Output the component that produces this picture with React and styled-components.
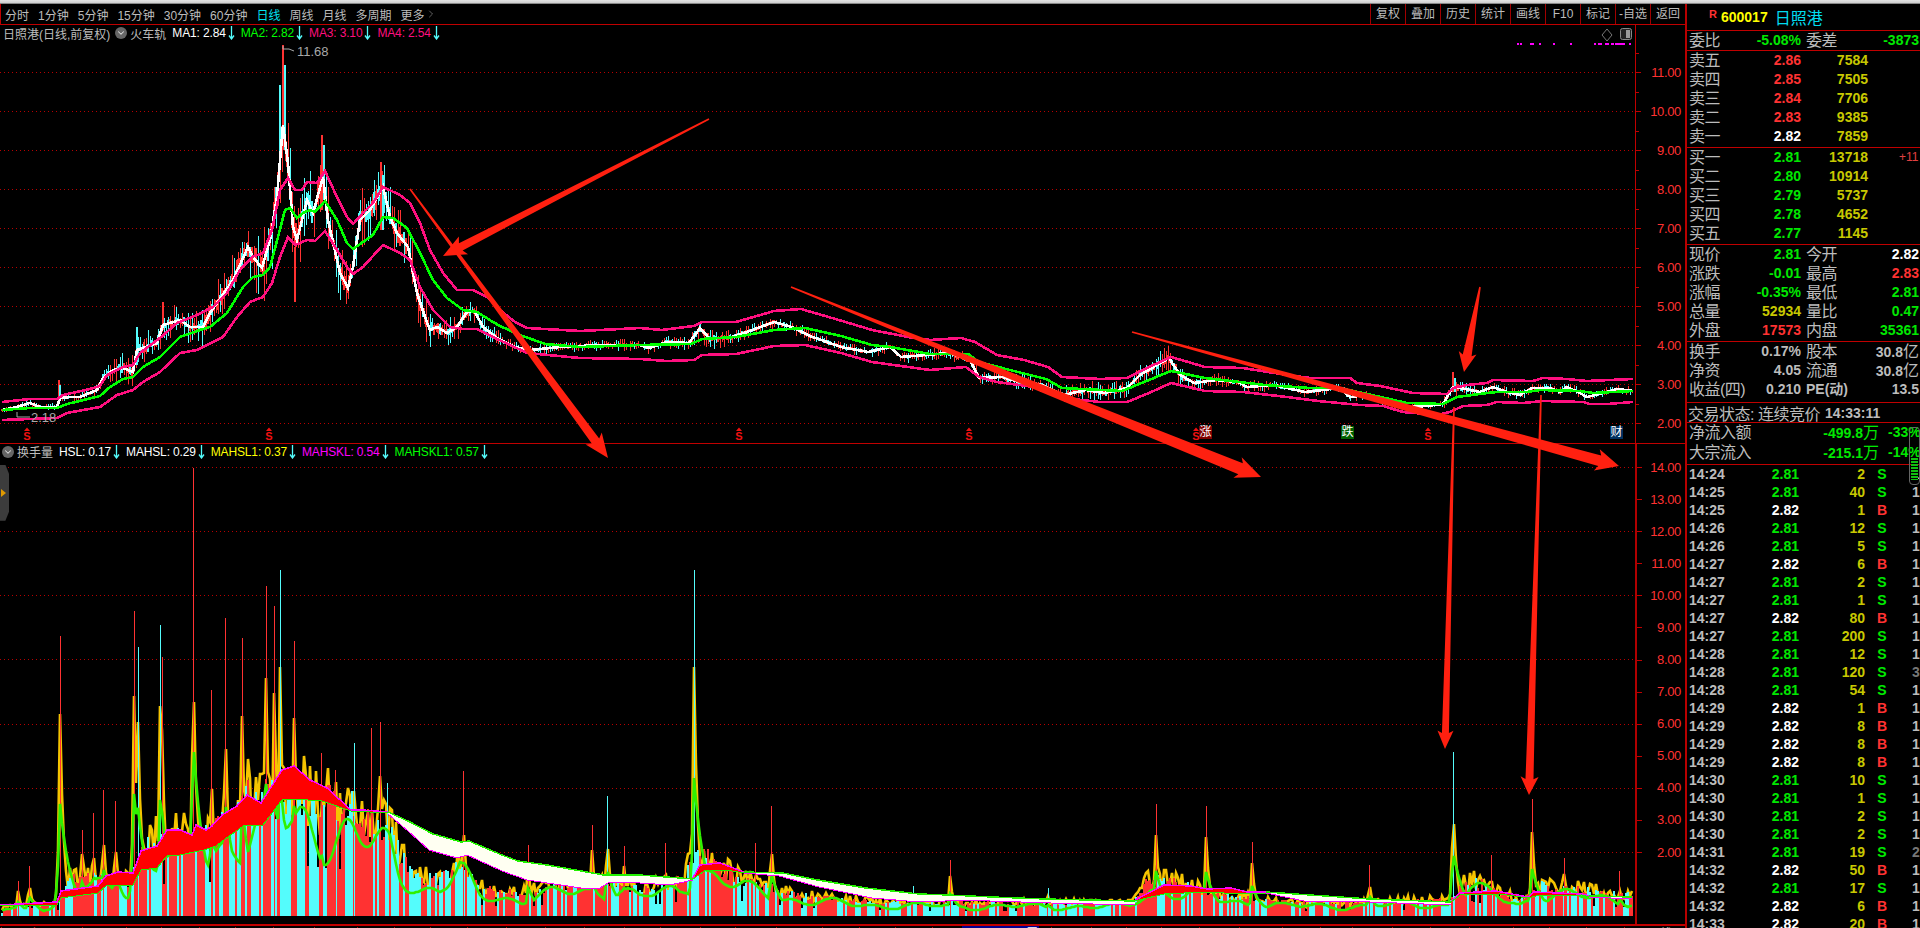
import React from 'react'
import styled, { createGlobalStyle } from 'styled-components'
import { ChevronDown, ChevronRight } from 'lucide-react'

// ---- colours used all over the terminal
const RED = '#ff3232'
const LINE = '#c00000'
const CYAN = '#54fcfc'
const GREEN = '#00e800'
const OLIVE = '#c8c800'
const PINK = '#ff0f7f'
const GREY = '#bcbcbc'

const SANS = `"Liberation Sans", "Noto Sans CJK SC", sans-serif`

// ---- price lines, read off the screenshot as [x, y]
const WHITE_LINE = [[2,410],[13,408],[30,403],[40,407],[57,407],[60,398],[70,397],[80,397],[97,390],[103,378],[113,370],[123,368],[133,372],[137,350],[143,348],[157,343],[163,325],[180,320],[190,327],[203,327],[210,313],[217,303],[233,280],[248,247],[253,257],[262,268],[270,240],[277,197],[283,125],[288,163],[293,227],[297,240],[307,200],[313,213],[323,177],[328,220],[340,273],[348,288],[353,267],[360,220],[370,210],[383,187],[390,217],[397,233],[408,247],[417,293],[425,317],[430,330],[437,327],[447,333],[457,327],[467,312],[475,312],[483,327],[497,338],[515,347],[530,350],[560,347],[600,345],[640,345],[649,348],[667,342],[689,343],[700,328],[709,338],[729,338],[747,332],[774,322],[792,327],[810,336],[841,347],[868,352],[890,347],[901,357],[926,355],[948,353],[970,360],[979,378],[1002,377],[1019,382],[1042,385],[1064,395],[1086,390],[1104,393],[1127,388],[1140,375],[1169,358],[1180,375],[1194,383],[1216,380],[1238,382],[1247,387],[1274,385],[1305,392],[1340,388],[1350,397],[1367,395],[1387,404],[1410,407],[1427,406],[1443,404],[1453,387],[1460,388],[1480,392],[1493,387],[1507,392],[1520,395],[1532,388],[1550,388],[1560,392],[1567,387],[1578,392],[1587,397],[1607,392],[1617,389],[1633,391]]
const GREEN_LINE = [[2,410],[30,408],[57,408],[67,404],[100,396],[110,387],[123,379],[133,377],[143,367],[160,357],[180,337],[200,330],[210,327],[227,313],[243,287],[253,277],[263,275],[270,267],[278,237],[285,210],[290,208],[297,218],[303,213],[310,210],[315,212],[325,201],[337,220],[347,243],[353,249],[363,242],[373,235],[383,217],[393,218],[407,228],[420,253],[433,280],[447,298],[463,310],[477,312],[493,322],[500,326],[520,335],[545,344],[580,347],[640,345],[691,344],[702,339],[736,337],[774,330],[805,328],[841,336],[872,345],[890,347],[930,354],[968,354],[979,362],[1006,369],[1046,379],[1062,388],[1122,391],[1144,382],[1171,371],[1205,378],[1265,385],[1310,388],[1340,388],[1367,394],[1407,403],[1443,404],[1457,397],[1487,393],[1497,392],[1527,392],[1540,390],[1580,391],[1593,393],[1633,391]]
const UPPER_BAND = [[2,402],[30,399],[57,399],[63,395],[90,389],[100,386],[107,375],[123,367],[133,365],[140,353],[160,338],[177,323],[197,315],[213,307],[227,293],[240,270],[252,257],[263,253],[272,230],[280,190],[288,178],[295,190],[302,190],[307,182],[317,183],[325,171],[337,197],[347,217],[353,224],[363,213],[373,203],[383,187],[400,195],[410,203],[420,223],[430,250],[443,273],[457,290],[473,290],[487,297],[500,310],[515,322],[527,328],[580,331],[640,328],[662,330],[694,326],[702,322],[736,322],[774,311],[801,309],[832,318],[872,330],[908,337],[930,340],[961,338],[975,342],[997,355],[1024,360],[1048,367],[1062,377],[1100,379],[1127,378],[1149,367],[1171,357],[1205,367],[1243,368],[1287,375],[1310,378],[1350,378],[1357,383],[1380,386],[1413,393],[1447,394],[1453,388],[1467,385],[1487,383],[1493,380],[1533,381],[1543,378],[1567,379],[1587,381],[1633,379]]
const LOWER_BAND = [[2,420],[57,418],[67,413],[100,407],[117,395],[133,390],[143,382],[160,372],[180,353],[197,350],[223,337],[237,317],[250,302],[263,297],[272,283],[280,257],[288,237],[295,245],[307,240],[315,241],[325,231],[337,250],[347,267],[353,274],[363,267],[383,245],[400,253],[410,260],[420,287],[433,310],[450,327],[463,329],[477,329],[493,337],[527,353],[580,358],[640,359],[667,361],[694,360],[702,355],[736,354],[774,346],[805,345],[841,353],[872,362],[930,370],[966,367],[979,377],[997,382],[1042,388],[1064,398],[1100,402],[1127,402],[1149,393],[1171,383],[1205,391],[1243,392],[1287,397],[1318,401],[1360,405],[1383,406],[1403,412],[1437,415],[1450,412],[1463,406],[1487,405],[1497,402],[1523,403],[1543,401],[1583,402],[1590,404],[1607,404],[1633,402]]
const WICK_SIZE = [[0,3],[55,4],[64,4],[100,6],[115,14],[135,17],[165,16],[200,20],[240,30],[275,48],[300,38],[340,32],[385,32],[420,28],[440,16],[480,11],[520,5],[690,7],[700,14],[740,7],[900,6],[950,7],[1140,11],[1170,16],[1200,7],[1440,4],[1455,11],[1470,6],[1640,5]]
const BIG_WICKS = [[283,45,150,RED],[285,65,150,CYAN],[280,85,160,CYAN],[322,135,210,RED],[324,145,200,CYAN],[381,162,230,RED],[383,175,230,CYAN],[295,247,302,RED],[59,380,400,RED],[60,385,400,CYAN],[137,327,365,CYAN],[163,302,330,RED],[1453,372,392,RED],[1455,378,392,CYAN]]

// ---- turnover panel
const VOLUME_TOPS = [[0,905],[57,900],[70,875],[100,875],[130,878],[145,840],[170,830],[200,838],[230,808],[250,790],[280,790],[300,785],[330,793],[350,800],[370,820],[390,822],[400,852],[420,875],[440,875],[460,855],[480,885],[520,890],[560,882],[600,877],[620,877],[640,888],[680,877],[700,845],[720,865],[750,878],[800,892],[850,897],[900,899],[1000,900],[1130,900],[1150,875],[1180,880],[1220,892],[1300,900],[1450,897],[1470,875],[1520,897],[1540,882],[1632,892]]
const VOLUME_SPIKES = [[18,878,RED],[29,863,RED],[60,633,RED],[82,827,RED],[93,810,RED],[103,787,RED],[115,798,RED],[134,608,RED],[138,644,CYAN],[160,622,CYAN],[162,654,RED],[193,465,RED],[211,687,RED],[225,615,RED],[242,635,RED],[266,583,RED],[274,603,RED],[280,567,CYAN],[294,638,RED],[321,750,RED],[335,767,RED],[354,740,CYAN],[371,725,RED],[380,719,RED],[387,780,CYAN],[463,768,RED],[528,842,RED],[592,822,RED],[607,793,CYAN],[624,843,RED],[665,840,RED],[694,567,CYAN],[755,840,RED],[771,803,RED],[913,883,CYAN],[950,857,RED],[1048,885,CYAN],[1156,801,RED],[1206,803,RED],[1252,839,RED],[1369,862,RED],[1453,749,CYAN],[1491,852,RED],[1532,796,RED],[1564,855,RED],[1619,868,RED]]

// ribbon between the two long averages, red while the fast one is above
const RIBBONS = [
  { fill: '#ff0000', top: [[0,902],[57,899],[61,888],[98,883],[106,873],[118,869],[133,870],[141,848],[157,843],[167,827],[180,827],[192,832],[196,822],[206,827],[212,823],[222,812],[237,803],[247,792],[261,800],[282,767],[294,763],[310,777],[327,785],[351,807],[363,807],[388,809]], bottom: [[0,903],[57,902],[61,895],[98,890],[106,883],[133,882],[141,867],[157,865],[167,853],[180,852],[204,847],[216,843],[229,833],[245,822],[263,822],[282,797],[294,796],[322,798],[351,808],[388,810]] },
  { fill: '#fffff2', top: [[388,809],[408,818],[433,831],[461,839],[469,838],[502,852],[518,858],[547,862],[604,872],[640,872],[693,876]], bottom: [[388,811],[408,828],[429,847],[457,855],[467,852],[502,868],[527,877],[588,886],[600,885],[610,879],[640,880],[670,882],[693,877]] },
  { fill: '#ff0000', top: [[693,875],[700,862],[720,860],[744,869]], bottom: [[693,876],[706,867],[726,867],[744,870]] },
  { fill: '#fffff2', top: [[744,869],[783,870],[812,876],[866,885],[919,891],[949,892],[992,894],[1045,896],[1135,898]], bottom: [[744,870],[779,873],[819,884],[872,895],[919,899],[945,898],[959,897],[1051,900],[1135,902]] },
  { fill: '#ff0000', top: [[1135,897],[1164,882],[1191,883],[1207,886],[1231,885],[1247,889],[1266,889]], bottom: [[1135,898],[1164,891],[1204,889],[1244,891],[1266,890]] },
  { fill: '#fffff2', top: [[1266,889],[1370,896],[1451,899]], bottom: [[1266,890],[1304,898],[1370,899],[1451,902]] },
  { fill: '#ff0000', top: [[1451,898],[1460,890],[1496,888],[1528,894]], bottom: [[1451,899],[1460,892],[1500,891],[1528,895]] },
  { fill: '#ff0000', top: [[1528,894],[1534,889],[1582,891],[1589,893]], bottom: [[1528,895],[1536,893],[1582,892],[1589,894]] },
  { fill: '#fffff2', top: [[1589,893],[1632,894]], bottom: [[1589,894],[1632,896]] },
]

const DRAWN_ARROWS = [
  { tail: [709,119], tip: [443,256], neck: 8, head: 20, wing: 10 },
  { tail: [410,189], tip: [608,458], neck: 9, head: 21, wing: 10 },
  { tail: [791,287], tip: [1261,477], neck: 12, head: 22, wing: 11 },
  { tail: [1132,332], tip: [1619,466], neck: 11, head: 20, wing: 11 },
  { tail: [1480,287], tip: [1464,372], neck: 9, head: 17, wing: 9 },
  { tail: [1454,407], tip: [1445,749], neck: 7, head: 16, wing: 8 },
  { tail: [1541,395], tip: [1529,795], neck: 8, head: 16, wing: 9 },
]

const MAGENTA_DASHES = [[1517,2],[1520,2],[1530,4],[1539,2],[1553,2],[1570,2],[1594,2],[1598,4],[1605,4],[1611,3],[1615,10],[1629,2]]
const SIGNALS = [27, 269, 739, 969, 1196, 1428]
const UPPER_GRID = [72, 111, 150, 189, 228, 267, 306, 345, 384, 423]
const LOWER_GRID = [464, 528, 592, 656, 721, 785, 849]

const DATE_LABELS = [[1,'2014年'],[82,'9'],[126,'10'],[161,'12'],[199,'2'],[235,'4'],[273,'6'],[314,'8'],[357,'10'],[394,'12'],[430,'2'],[467,'4'],[506,'6'],[545,'8'],[584,'10'],[624,'12'],[660,'2'],[700,'4'],[735,'6'],[776,'8'],[822,'10'],[859,'12'],[895,'2'],[932,'4'],[1051,'10'],[1091,'12'],[1126,'2'],[1161,'4'],[1199,'6'],[1239,'8'],[1282,'10'],[1320,'12'],[1352,'2'],[1392,'4'],[1430,'6'],[1469,'8'],[1513,'10'],[1549,'12'],[1586,'2'],[1624,'4']]

const LEFT_TOOLS = ['分时', '1分钟', '5分钟', '15分钟', '30分钟', '60分钟', '日线', '周线', '月线', '多周期']
const RIGHT_TOOLS = ['复权', '叠加', '历史', '统计', '画线', 'F10', '标记', '-自选', '返回']

const SELLS = [['卖五','2.86','7584',RED],['卖四','2.85','7505',RED],['卖三','2.84','7706',RED],['卖二','2.83','9385',RED],['卖一','2.82','7859','#fff']]
const BUYS = [['买一','2.81','13718',GREEN,'+11'],['买二','2.80','10914',GREEN],['买三','2.79','5737',GREEN],['买四','2.78','4652',GREEN],['买五','2.77','1145',GREEN]]
const QUOTES = [
  ['现价','2.81',GREEN,'今开','2.82','#fff'],
  ['涨跌','-0.01',GREEN,'最高','2.83',RED],
  ['涨幅','-0.35%',GREEN,'最低','2.81',GREEN],
  ['总量','52934',OLIVE,'量比','0.47',GREEN],
  ['外盘','17573',RED,'内盘','35361',GREEN],
]
const TICKS = [
  ['14:24','2.81','2','S','1'],['14:25','2.81','40','S','1'],['14:25','2.82','1','B','1'],['14:26','2.81','12','S','1'],
  ['14:26','2.81','5','S','1'],['14:27','2.82','6','B','1'],['14:27','2.81','2','S','1'],['14:27','2.81','1','S','1'],
  ['14:27','2.82','80','B','1'],['14:27','2.81','200','S','1'],['14:28','2.81','12','S','1'],['14:28','2.81','120','S','3'],
  ['14:28','2.81','54','S','1'],['14:29','2.82','1','B','1'],['14:29','2.82','8','B','1'],['14:29','2.82','8','B','1'],
  ['14:29','2.82','8','B','1'],['14:30','2.81','10','S','1'],['14:30','2.81','1','S','1'],['14:30','2.81','2','S','1'],
  ['14:30','2.81','2','S','1'],['14:31','2.81','19','S','2'],['14:32','2.82','50','B','1'],['14:32','2.81','17','S','1'],
  ['14:32','2.82','6','B','1'],['14:33','2.82','20','B','1'],
]

// ---- small helpers
const makeRandom = (seed) => () => {
  seed = (seed * 16807) % 2147483647
  return (seed - 1) / 2147483646
}

const valueAt = (keys, x) => {
  if (x <= keys[0][0]) return keys[0][1]
  for (let i = 1; i < keys.length; i++) {
    if (x <= keys[i][0]) {
      const [x0, y0] = keys[i - 1]
      const [x1, y1] = keys[i]
      return y0 + ((x - x0) / (x1 - x0)) * (y1 - y0)
    }
  }
  return keys[keys.length - 1][1]
}

const toPoints = (list) => list.map((p) => p.join(',')).join(' ')

const arrowPoints = ({ tail, tip, neck, head, wing }) => {
  const dx = tip[0] - tail[0]
  const dy = tip[1] - tail[1]
  const len = Math.hypot(dx, dy)
  const ux = dx / len
  const uy = dy / len
  const at = (back, side) => [tip[0] - ux * back - uy * side, tip[1] - uy * back + ux * side]
  return toPoints([
    at(len, 0.8), at(head, neck / 2), at(head * 1.15, wing), tip,
    at(head * 1.15, -wing), at(head, -neck / 2), at(len, -0.8),
  ])
}

// candles are generated around the white line, not stored bar by bar
const buildCandles = () => {
  const rand = makeRandom(4711)
  let red = ''
  let cyan = ''
  let redBody = ''
  let cyanBody = ''
  for (let x = 2; x < 1633; x += 2) {
    const mid = valueAt(WHITE_LINE, x)
    const size = valueAt(WICK_SIZE, x)
    const top = Math.round(mid - size * rand())
    const bottom = Math.round(mid + size * rand())
    const isRed = rand() > 0.45
    const wick = `M${x} ${top}V${bottom}`
    const body = `M${x} ${Math.round(mid - size * 0.35 * rand())}V${Math.round(mid + size * 0.35 * rand())}`
    if (isRed) {
      red += wick
      redBody += body
    } else {
      cyan += wick
      cyanBody += body
    }
  }
  return { red, cyan, redBody, cyanBody }
}

const spikeHeight = (s) => 913 - s[1]

const orangeAt = (x, base, jitter) => {
  let h = base * 0.9 * jitter
  VOLUME_SPIKES.forEach((s) => {
    const dx = x - s[0]
    const shape = Math.exp(-Math.abs(dx) / (dx < 0 ? 1.8 : 4))
    h = Math.max(h, Math.min(spikeHeight(s) * 0.72, 275) * shape)
  })
  return h
}

const greenAt = (x, base) => {
  // a slow wobble so the average doesn't run as a flat line between spikes
  const wobble = 0.72 + 0.3 * Math.sin(x / 9) * Math.sin(x / 23)
  let h = base * wobble
  VOLUME_SPIKES.forEach((s) => {
    const dx = x - s[0]
    const shape = dx < 0 ? Math.exp(dx / 2.5) : Math.exp(-dx / 11)
    h = Math.max(h, Math.min(spikeHeight(s) * 0.4, 190) * shape)
  })
  return h
}

const buildVolumes = () => {
  const rand = makeRandom(90210)
  let red = ''
  let cyan = ''
  let redIsOn = true
  const orange = []
  const lime = []
  for (let x = 2; x < 1634; x += 2) {
    const base = 913 - valueAt(VOLUME_TOPS, x)
    if (rand() > (redIsOn ? 0.65 : 0.55)) redIsOn = !redIsOn
    const h = rand() < 0.04 ? base * 0.4 : base * (0.78 + rand() * 0.35)
    const bar = `M${x} ${Math.round(913 - h)}V913`
    if (redIsOn) red += bar
    else cyan += bar
    orange.push([x, Math.round(913 - orangeAt(x, base, 0.7 + rand() * 0.75))])
    lime.push([x, Math.round(913 - greenAt(x, base))])
  }
  return { red, cyan, orange: toPoints(orange), lime: toPoints(lime) }
}

const candles = buildCandles()
const volumes = buildVolumes()

const GlobalStyle = createGlobalStyle`
  html, body {
    margin: 0;
    padding: 0;
    background: #000;
    overflow: hidden;
  }
`

const Page = styled.div`
  position: relative;
  width: 1920px;
  height: 928px;
  overflow: hidden;
  background: #000;
  font-family: ${SANS};
  display: flex;
  flex-direction: column;
`

const TopStrip = styled.div`
  flex: 0 0 4px;
  background: linear-gradient(#e4e4e4, #cfcfcf 70%, #555);
`

const Workspace = styled.div`
  flex: 1;
  display: flex;
  min-height: 0;
`

const ChartColumn = styled.div`
  flex: 0 0 1685px;
  display: flex;
  flex-direction: column;
`

const Toolbar = styled.div`
  flex: 0 0 20px;
  display: flex;
  justify-content: space-between;
  border-left: 1px solid ${LINE};
  border-bottom: 1px solid ${LINE};
`

const ToolGroup = styled.div`
  display: flex;
  align-items: center;
  gap: 9px;
  padding-left: 4px;
`

const ToolLink = styled.span`
  display: flex;
  align-items: center;
  font-size: 12px;
  color: ${(p) => (p.$active ? '#00e0f0' : GREY)};
  white-space: nowrap;
`

const ToolCells = styled.div`
  display: flex;
`

const ToolCell = styled.span`
  width: 35px;
  box-sizing: border-box;
  border-left: 1px solid #a00000;
  font-size: 12px;
  line-height: 20px;
  text-align: center;
  color: ${GREY};
`

const Panel = styled.div`
  flex: 0 0 ${(p) => p.$height}px;
  display: flex;
  box-sizing: border-box;
  border-bottom: ${(p) => p.$rule}px solid ${LINE};
`

const Plot = styled.div`
  position: relative;
  flex: 0 0 1635px;
  overflow: hidden;

  svg {
    display: block;
  }
`

const Legend = styled.div`
  position: absolute;
  top: ${(p) => p.$top}px;
  left: ${(p) => p.$left}px;
  display: flex;
  align-items: center;
  gap: 3px;
  height: 16px;
  font-size: 12px;
  white-space: nowrap;
`

const LegendTitle = styled.span`
  color: ${GREY};
`

const LegendValue = styled.span`
  display: flex;
  align-items: center;
  gap: 2px;
  margin-left: 3px;
  letter-spacing: -0.15px;
  color: ${(p) => p.$color};
`

const RoundKnob = styled.span`
  display: flex;
  align-items: center;
  justify-content: center;
  width: 12px;
  height: 12px;
  margin: 0 0 0 2px;
  border-radius: 50%;
  background: #666;
  color: #ddd;
`

const Badge = styled.span`
  position: absolute;
  top: 401px;
  left: ${(p) => p.$x}px;
  width: 13px;
  height: 13px;
  background: ${(p) => p.$bg};
  color: #fff;
  font-size: 12px;
  line-height: 13px;
  text-align: center;
`

const SideHandle = styled.div`
  position: absolute;
  top: 21px;
  left: 0;
  width: 9px;
  height: 56px;
  background: #3c3c3c;
  clip-path: polygon(0 0, 60% 0, 100% 16%, 100% 84%, 60% 100%, 0 100%);
  display: flex;
  align-items: center;

  &::before {
    content: '';
    border-left: 5px solid #e09a00;
    border-top: 4px solid transparent;
    border-bottom: 4px solid transparent;
    margin-left: 1px;
  }
`

const Axis = styled.div`
  flex: 1;
  box-sizing: border-box;
  padding-top: ${(p) => p.$offset}px;
  border-left: ${(p) => p.$rule}px solid ${(p) => (p.$rule > 1 ? '#b00000' : LINE)};
`

const AxisLabel = styled.div`
  position: relative;
  height: ${(p) => p.$step}px;
  display: flex;
  align-items: center;
  justify-content: flex-end;
  padding-right: 4px;
  font-size: 13px;
  letter-spacing: -0.35px;
  color: ${RED};

  &::before {
    content: '';
    position: absolute;
    left: 0;
    top: 50%;
    width: 5px;
    height: 1px;
    background: ${LINE};
  }

  &::after {
    content: '';
    position: absolute;
    left: 0;
    top: 0;
    width: ${(p) => (p.$minor ? 3 : 0)}px;
    height: 1px;
    background: ${LINE};
  }
`

const DateAxis = styled.div`
  position: relative;
  flex: 1;
  overflow: hidden;
`

const DateMark = styled.span.attrs((p) => ({ style: { left: p.$x } }))`
  position: absolute;
  top: 1px;
  padding-left: 2px;
  border-left: 1px solid ${LINE};
  font-size: 12px;
  line-height: 14px;
  color: ${RED};
  white-space: nowrap;
`

const CursorDate = styled.span`
  position: absolute;
  top: 0;
  left: 962px;
  width: 77px;
  height: 14px;
  background: #000090;
  color: #fff;
  font-size: 12px;
  line-height: 15px;
  text-align: center;
`

const PeriodName = styled.span`
  position: absolute;
  top: 1px;
  left: 1648px;
  font-size: 12px;
  line-height: 14px;
  color: ${GREY};
`

const Sidebar = styled.aside`
  position: relative;
  flex: 1;
  display: flex;
  flex-direction: column;
  min-width: 0;
  overflow: hidden;
  border-left: 2px solid #b80000;
  color: ${GREY};
`

const Section = styled.section`
  flex: 0 0 auto;
  box-sizing: border-box;
  height: ${(p) => p.$height}px;
  border-bottom: 1px solid ${LINE};
  overflow: hidden;
`

const StockTitle = styled.div`
  display: flex;
  align-items: center;
  height: 26px;
  padding-left: 22px;
`

const MarginFlag = styled.span`
  align-self: flex-start;
  margin-top: 4px;
  font-size: 11px;
  font-weight: 700;
  color: ${RED};
`

const StockCode = styled.span`
  margin-left: 4px;
  font-size: 14px;
  font-weight: 700;
  color: #ffff00;
`

const StockName = styled.span`
  margin-left: 7px;
  font-size: 16px;
  color: #00dcf0;
`

const CnLabel = styled.span`
  font-size: 16px;
  letter-spacing: -0.5px;
  white-space: nowrap;
`

const Num = styled.span`
  font-size: 14px;
  font-weight: 700;
  text-align: right;
  white-space: nowrap;
  color: ${(p) => p.$color || GREY};
`

const PlainNum = styled(Num)`
  text-align: left;
`

const Unit = styled.span`
  font-size: 16px;
  font-weight: 400;
`

const QuoteRow = styled.div`
  display: grid;
  grid-template-columns: 44px 68px 36px 1fr;
  height: 19px;
  line-height: 19px;
  padding: 0 1px 0 2px;

  & > :nth-child(3) {
    margin-left: 5px;
  }
`

const OrderRow = styled.div`
  display: grid;
  grid-template-columns: 44px 68px 67px 1fr;
  height: 19px;
  line-height: 19px;
  padding-left: 2px;
`

const Change = styled.span`
  padding-left: 31px;
  font-size: 12px;
  color: #e04040;
`

const StatusRow = styled.div`
  display: flex;
  align-items: center;
  gap: 5px;
  height: 19px;
  padding-left: 1px;
`

const FlowRow = styled.div`
  display: grid;
  grid-template-columns: 90px 100px auto;
  height: 19.5px;
  line-height: 19.5px;
  padding-left: 2px;
  white-space: nowrap;
`

const FlowShare = styled(PlainNum)`
  padding-left: 9px;
`

const TickList = styled.div`
  flex: 1;
`

const TickRow = styled.div`
  display: grid;
  grid-template-columns: 44px 66px 66px 34px 1fr;
  height: 18px;
  line-height: 18px;
  padding-left: 2px;
`

const Side = styled(Num)`
  text-align: center;
`

const LastCol = styled(PlainNum)`
  padding-left: 13px;
  color: ${(p) => (p.$dim ? '#777' : GREY)};
`

const Gauge = styled.div`
  position: absolute;
  top: 423px;
  left: 222px;
  box-sizing: border-box;
  width: 11px;
  height: 58px;
  padding: 30px 1px 4px;
  border: 1px solid #666;
  border-radius: 4px;

  &::before {
    content: '';
    display: block;
    height: 100%;
    background: repeating-linear-gradient(#10c010 0 2px, #000 2px 3px);
  }
`

const ArrowLayer = styled.svg`
  position: absolute;
  top: 0;
  left: 0;
  pointer-events: none;
`

const Line = ({ points, color, width = 2.6 }) => (
  <polyline points={toPoints(points)} fill="none" stroke={color} strokeWidth={width} shapeRendering="crispEdges" />
)

const DownMark = () => (
  <svg width="7" height="14" viewBox="0 0 7 14">
    <path d="M3.5 0V12M1 9.5L3.5 13L6 9.5" fill="none" stroke={CYAN} strokeWidth="1.3" />
  </svg>
)

const GridLines = ({ rows }) => (
  <g shapeRendering="crispEdges">
    {rows.map((y) => (
      <line key={y} x1="0" x2="1635" y1={y + 0.5} y2={y + 0.5} stroke="#b80000" strokeDasharray="1 3" />
    ))}
  </g>
)

const SignalMark = ({ x }) => (
  <g>
    <path d={`M${x - 3} 431L${x} 427.5L${x + 3} 431Z`} fill="#f01010" />
    <text x={x} y="439.5" fontSize="11" fontWeight="700" textAnchor="middle" fill="#f01010" fontFamily={SANS}>S</text>
  </g>
)

const PriceChart = () => (
  <svg width="1635" height="415" viewBox="0 25 1635 415">
    <GridLines rows={UPPER_GRID} />
    <g shapeRendering="crispEdges" fill="none">
      <path d={candles.red} stroke={RED} strokeWidth="1" />
      <path d={candles.cyan} stroke={CYAN} strokeWidth="1" />
      <path d={candles.redBody} stroke={RED} strokeWidth="2" />
      <path d={candles.cyanBody} stroke={CYAN} strokeWidth="2" />
      {BIG_WICKS.map(([x, y1, y2, color]) => (
        <line key={`${x}-${y1}`} x1={x} x2={x} y1={y1} y2={y2} stroke={color} strokeWidth="1.5" />
      ))}
    </g>
    <Line points={WHITE_LINE} color="#fff" />
    <Line points={UPPER_BAND} color={PINK} />
    <Line points={LOWER_BAND} color={PINK} />
    <Line points={GREEN_LINE} color="#00ff00" />

    <polyline points="283,46 283,49 289,49 294,51" fill="none" stroke="#a8a8a8" />
    <text x="297" y="56" fontSize="13" fill="#a8a8a8" fontFamily={SANS}>11.68</text>
    <polyline points="17,412 17,417 30,417" fill="none" stroke="#a8a8a8" />
    <text x="31" y="422" fontSize="13" fill="#a8a8a8" fontFamily={SANS}>2.18</text>

    {MAGENTA_DASHES.map(([x, w]) => (
      <rect key={x} x={x} y="43" width={w} height="2" fill="#ff00ff" />
    ))}
    <path d="M1607 29L1612 35L1607 41L1602 35Z" fill="none" stroke="#777" />
    <rect x="1620.5" y="28.5" width="11" height="11" rx="2" fill="#222" stroke="#888" />
    <rect x="1626" y="30" width="4" height="8" fill="#999" />

    {SIGNALS.map((x) => (
      <SignalMark key={x} x={x} />
    ))}
  </svg>
)

const TurnoverChart = () => (
  <svg width="1635" height="478" viewBox="0 441 1635 478">
    <GridLines rows={LOWER_GRID} />
    <polyline points={volumes.orange} fill="none" stroke="#f5c400" strokeWidth="2.6" />
    <g shapeRendering="crispEdges" fill="none">
      <path d={volumes.red} stroke={RED} strokeWidth="2" />
      <path d={volumes.cyan} stroke={CYAN} strokeWidth="2" />
      {VOLUME_SPIKES.map(([x, top, color]) => (
        <line key={x} x1={x} x2={x} y1={top} y2="913" stroke={color} strokeWidth="1" />
      ))}
    </g>
    <polyline points={volumes.lime} fill="none" stroke="#30f000" strokeWidth="2.6" />
    {RIBBONS.map((r) => {
      const isRed = r.fill === '#ff0000'
      return (
        <g key={r.top[0][0]} shapeRendering="crispEdges">
          <polygon points={toPoints([...r.top, ...[...r.bottom].reverse()])} fill={r.fill} />
          <polyline points={toPoints(r.top)} fill="none" stroke={isRed ? '#ff00ff' : '#22f000'} strokeWidth="1.5" />
          <polyline points={toPoints(r.bottom)} fill="none" stroke={isRed ? '#22f000' : '#ff00ff'} strokeWidth="1" />
        </g>
      )
    })}
  </svg>
)

const AxisColumn = ({ labels, step, offset, rule, minor }) => (
  <Axis $offset={offset} $rule={rule}>
    {labels.map((label) => (
      <AxisLabel key={label} $step={step} $minor={minor}>{label}</AxisLabel>
    ))}
  </Axis>
)

const App = () => (
  <Page>
    <GlobalStyle />
    <TopStrip />
    <Workspace>
      <ChartColumn>
        <Toolbar>
          <ToolGroup>
            {LEFT_TOOLS.map((tool) => (
              <ToolLink key={tool} $active={tool === '日线'}>{tool}</ToolLink>
            ))}
            <ToolLink>更多<ChevronRight size={12} strokeWidth={1} /></ToolLink>
          </ToolGroup>
          <ToolCells>
            {RIGHT_TOOLS.map((tool) => (
              <ToolCell key={tool}>{tool}</ToolCell>
            ))}
          </ToolCells>
        </Toolbar>

        <Panel $height={416} $rule={1}>
          <Plot>
            <PriceChart />
            <Legend $top={0} $left={3}>
              <LegendTitle>日照港(日线,前复权)</LegendTitle>
              <RoundKnob><ChevronDown size={10} strokeWidth={2.5} /></RoundKnob>
              <LegendTitle>火车轨</LegendTitle>
              <LegendValue $color="#fff">MA1: 2.84<DownMark /></LegendValue>
              <LegendValue $color="#00ff00">MA2: 2.82<DownMark /></LegendValue>
              <LegendValue $color={PINK}>MA3: 3.10<DownMark /></LegendValue>
              <LegendValue $color={PINK}>MA4: 2.54<DownMark /></LegendValue>
            </Legend>
            <Badge $x={1199} $bg="#800000">涨</Badge>
            <Badge $x={1341} $bg="#006000">跌</Badge>
            <Badge $x={1610} $bg="#003060">财</Badge>
          </Plot>
          <AxisColumn
            labels={['11.00', '10.00', '9.00', '8.00', '7.00', '6.00', '5.00', '4.00', '3.00', '2.00']}
            step={39}
            offset={27.8}
            rule={1}
            minor
          />
        </Panel>

        <Panel $height={482} $rule={2}>
          <Plot>
            <TurnoverChart />
            <Legend $top={0} $left={0}>
              <RoundKnob><ChevronDown size={10} strokeWidth={2.5} /></RoundKnob>
              <LegendTitle>换手量</LegendTitle>
              <LegendValue $color="#fff">HSL: 0.17<DownMark /></LegendValue>
              <LegendValue $color="#fff">MAHSL: 0.29<DownMark /></LegendValue>
              <LegendValue $color="#ffff00">MAHSL1: 0.37<DownMark /></LegendValue>
              <LegendValue $color="#ff00ff">MAHSKL: 0.54<DownMark /></LegendValue>
              <LegendValue $color="#00ff00">MAHSKL1: 0.57<DownMark /></LegendValue>
            </Legend>
            <SideHandle />
          </Plot>
          <AxisColumn
            labels={['14.00', '13.00', '12.00', '11.00', '10.00', '9.00', '8.00', '7.00', '6.00', '5.00', '4.00', '3.00', '2.00']}
            step={32.09}
            offset={7.25}
            rule={2}
          />
        </Panel>

        <DateAxis>
          {DATE_LABELS.map(([x, text]) => (
            <DateMark key={x} $x={x}>{text}</DateMark>
          ))}
          <CursorDate>2018/05/28/五</CursorDate>
          <PeriodName>日线</PeriodName>
        </DateAxis>
      </ChartColumn>

      <Sidebar>
        <Section $height={27}>
          <StockTitle>
            <MarginFlag>R</MarginFlag>
            <StockCode>600017</StockCode>
            <StockName>日照港</StockName>
          </StockTitle>
        </Section>

        <Section $height={20}>
          <QuoteRow>
            <CnLabel>委比</CnLabel>
            <Num $color={GREEN}>-5.08%</Num>
            <CnLabel>委差</CnLabel>
            <Num $color={GREEN}>-3873</Num>
          </QuoteRow>
        </Section>

        <Section $height={97}>
          {SELLS.map(([label, price, vol, color]) => (
            <OrderRow key={label}>
              <CnLabel>{label}</CnLabel>
              <Num $color={color}>{price}</Num>
              <Num $color={OLIVE}>{vol}</Num>
            </OrderRow>
          ))}
        </Section>

        <Section $height={97}>
          {BUYS.map(([label, price, vol, color, change]) => (
            <OrderRow key={label}>
              <CnLabel>{label}</CnLabel>
              <Num $color={color}>{price}</Num>
              <Num $color={OLIVE}>{vol}</Num>
              {change && <Change>{change}</Change>}
            </OrderRow>
          ))}
        </Section>

        <Section $height={97}>
          {QUOTES.map(([labelA, valueA, colorA, labelB, valueB, colorB]) => (
            <QuoteRow key={labelA}>
              <CnLabel>{labelA}</CnLabel>
              <Num $color={colorA}>{valueA}</Num>
              <CnLabel>{labelB}</CnLabel>
              <Num $color={colorB}>{valueB}</Num>
            </QuoteRow>
          ))}
        </Section>

        <Section $height={61}>
          <QuoteRow>
            <CnLabel>换手</CnLabel>
            <Num>0.17%</Num>
            <CnLabel>股本</CnLabel>
            <Num>30.8<Unit>亿</Unit></Num>
          </QuoteRow>
          <QuoteRow>
            <CnLabel>净资</CnLabel>
            <Num>4.05</Num>
            <CnLabel>流通</CnLabel>
            <Num>30.8<Unit>亿</Unit></Num>
          </QuoteRow>
          <QuoteRow>
            <CnLabel>收益(四)</CnLabel>
            <Num>0.210</Num>
            <PlainNum>PE(动)</PlainNum>
            <Num>13.5</Num>
          </QuoteRow>
        </Section>

        <Section $height={20}>
          <StatusRow>
            <CnLabel>交易状态: 连续竞价</CnLabel>
            <Num>14:33:11</Num>
          </StatusRow>
        </Section>

        <Section $height={42}>
          <FlowRow>
            <CnLabel>净流入额</CnLabel>
            <Num $color={GREEN}>-499.8<Unit>万</Unit></Num>
            <FlowShare $color={GREEN}>-33%</FlowShare>
          </FlowRow>
          <FlowRow>
            <CnLabel>大宗流入</CnLabel>
            <Num $color={GREEN}>-215.1<Unit>万</Unit></Num>
            <FlowShare $color={GREEN}>-14%</FlowShare>
          </FlowRow>
        </Section>

        <TickList>
          {TICKS.map(([time, price, vol, side, last], i) => (
            <TickRow key={i}>
              <PlainNum>{time}</PlainNum>
              <Num $color={price === '2.82' ? '#fff' : GREEN}>{price}</Num>
              <Num $color={OLIVE}>{vol}</Num>
              <Side $color={side === 'B' ? RED : GREEN}>{side}</Side>
              <LastCol $dim={last !== '1'}>{last}</LastCol>
            </TickRow>
          ))}
        </TickList>

        <Gauge />
      </Sidebar>
    </Workspace>

    <ArrowLayer width="1920" height="928" viewBox="0 0 1920 928">
      {DRAWN_ARROWS.map((a) => (
        <polygon key={a.tail.join()} points={arrowPoints(a)} fill="#ff2010" />
      ))}
    </ArrowLayer>
  </Page>
)

export default App
